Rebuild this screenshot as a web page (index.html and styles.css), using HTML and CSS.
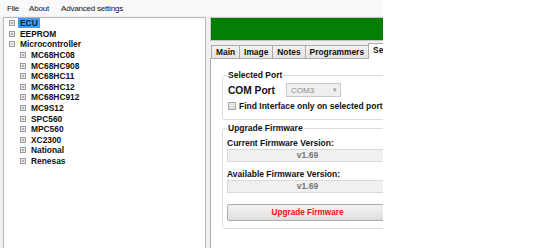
FILE: index.html
```html
<!DOCTYPE html>
<html lang="en">
<head>
  <meta charset="UTF-8">
  <title>Programmer</title>
  <link rel="stylesheet" href="styles.css">
</head>
<body>

  <div class="app">
    <!-- menu -->
    <div class="menubar">
      <span class="menu-item">File</span>
      <span class="menu-item">About</span>
      <span class="menu-item">Advanced settings</span>
    </div>

    <div class="workspace">
      <!-- device tree -->
      <div class="tree">
        <div class="node">
          <svg class="expander" viewBox="0 0 6 6"><rect x="0.5" y="0.5" width="5" height="5"/><path d="M1.5 3h3M3 1.5v3"/></svg>
          <span class="label selected">ECU</span>
        </div>
        <div class="node">
          <svg class="expander" viewBox="0 0 6 6"><rect x="0.5" y="0.5" width="5" height="5"/><path d="M1.5 3h3M3 1.5v3"/></svg>
          <span class="label">EEPROM</span>
        </div>
        <div class="node">
          <svg class="expander" viewBox="0 0 6 6"><rect x="0.5" y="0.5" width="5" height="5"/><path d="M1.5 3h3"/></svg>
          <span class="label">Microcontroller</span>
        </div>
        <div class="node child">
          <svg class="expander" viewBox="0 0 6 6"><rect x="0.5" y="0.5" width="5" height="5"/><path d="M1.5 3h3M3 1.5v3"/></svg>
          <span class="label">MC68HC08</span>
        </div>
        <div class="node child">
          <svg class="expander" viewBox="0 0 6 6"><rect x="0.5" y="0.5" width="5" height="5"/><path d="M1.5 3h3M3 1.5v3"/></svg>
          <span class="label">MC68HC908</span>
        </div>
        <div class="node child">
          <svg class="expander" viewBox="0 0 6 6"><rect x="0.5" y="0.5" width="5" height="5"/><path d="M1.5 3h3M3 1.5v3"/></svg>
          <span class="label">MC68HC11</span>
        </div>
        <div class="node child">
          <svg class="expander" viewBox="0 0 6 6"><rect x="0.5" y="0.5" width="5" height="5"/><path d="M1.5 3h3M3 1.5v3"/></svg>
          <span class="label">MC68HC12</span>
        </div>
        <div class="node child">
          <svg class="expander" viewBox="0 0 6 6"><rect x="0.5" y="0.5" width="5" height="5"/><path d="M1.5 3h3M3 1.5v3"/></svg>
          <span class="label">MC68HC912</span>
        </div>
        <div class="node child">
          <svg class="expander" viewBox="0 0 6 6"><rect x="0.5" y="0.5" width="5" height="5"/><path d="M1.5 3h3M3 1.5v3"/></svg>
          <span class="label">MC9S12</span>
        </div>
        <div class="node child">
          <svg class="expander" viewBox="0 0 6 6"><rect x="0.5" y="0.5" width="5" height="5"/><path d="M1.5 3h3M3 1.5v3"/></svg>
          <span class="label">SPC560</span>
        </div>
        <div class="node child">
          <svg class="expander" viewBox="0 0 6 6"><rect x="0.5" y="0.5" width="5" height="5"/><path d="M1.5 3h3M3 1.5v3"/></svg>
          <span class="label">MPC560</span>
        </div>
        <div class="node child">
          <svg class="expander" viewBox="0 0 6 6"><rect x="0.5" y="0.5" width="5" height="5"/><path d="M1.5 3h3M3 1.5v3"/></svg>
          <span class="label">XC2300</span>
        </div>
        <div class="node child">
          <svg class="expander" viewBox="0 0 6 6"><rect x="0.5" y="0.5" width="5" height="5"/><path d="M1.5 3h3M3 1.5v3"/></svg>
          <span class="label">National</span>
        </div>
        <div class="node child">
          <svg class="expander" viewBox="0 0 6 6"><rect x="0.5" y="0.5" width="5" height="5"/><path d="M1.5 3h3M3 1.5v3"/></svg>
          <span class="label">Renesas</span>
        </div>
      </div>

      <!-- right side -->
      <div class="panel">
        <div class="status"></div>

        <div class="tabs">
          <div class="tab">Main</div>
          <div class="tab">Image</div>
          <div class="tab">Notes</div>
          <div class="tab">Programmers</div>
          <div class="tab active">Settings</div>
        </div>

        <div class="tabpage">
          <fieldset class="group">
            <legend>Selected Port</legend>
            <div class="port-row">
              <span class="port-label">COM Port</span>
              <div class="combo">
                <span>COM3</span>
                <span class="combo-arrow">&#9662;</span>
              </div>
            </div>
            <div class="check-row">
              <span class="checkbox"></span>
              <span>Find Interface only on selected port</span>
            </div>
          </fieldset>

          <fieldset class="group group-fw">
            <legend>Upgrade Firmware</legend>
            <div class="field-label">Current Firmware Version:</div>
            <div class="readonly">v1.69</div>
            <div class="field-label second">Available Firmware Version:</div>
            <div class="readonly">v1.69</div>
            <div class="upgrade-btn">Upgrade Firmware</div>
          </fieldset>
        </div>
      </div>
    </div>
  </div>

</body>
</html>
```

FILE: styles.css
```css
* {
  box-sizing: border-box;
}

body {
  margin: 0;
  background: #fff;
  font-family: 'Liberation Sans', Arial, sans-serif;
  color: #111;
}

.app {
  width: 383px;
  height: 248px;
  overflow: hidden;
  background: #f0f0f0;
  display: flex;
  flex-direction: column;
}

/* menu */
.menubar {
  height: 16px;
  flex: none;
  display: flex;
  align-items: center;
  padding-left: 7px;
  gap: 10px;
  background: #f9f9f9;
  font-size: 8px;
  letter-spacing: -0.2px;
}

.menu-item:nth-child(2) {
  margin-right: 2px;
}

/* main area: tree and tab page both run on below the window edge */
.workspace {
  display: flex;
  flex: 1;
  padding-top: 1px;
  min-height: 0;
}

.tree {
  width: 203px;
  flex: none;
  margin-left: 3px;
  background: #fff;
  border: 1px solid #b4b6bb;
  border-bottom: none;
  font-size: 8.4px;
  font-weight: bold;
}

.node {
  height: 10.6px;
  display: flex;
  align-items: center;
  padding-left: 5px;
}

.node.child {
  padding-left: 16px;
}

.expander {
  width: 6px;
  height: 6px;
  flex: none;
  margin-right: 3px;
  fill: #fafafa;
  stroke: #9a9a9a;
  stroke-width: 1;
}

.label {
  padding: 0 2px;
  line-height: 10px;
}

.label.selected {
  background: #3f9ef2;
  color: #0d2340;
}

/* right side */
.panel {
  width: 210px;
  flex: none;
  margin-left: 4px;
  display: flex;
  flex-direction: column;
}

.status {
  height: 24px;
  flex: none;
  background: #038003;
  border: 1px solid #c6c6c6;
}

.tabs {
  display: flex;
  align-items: flex-end;
  height: 16px;
  margin-top: 1px;
  padding-left: 1px;
  font-size: 8.4px;
  font-weight: bold;
}

.tab {
  height: 13px;
  line-height: 12px;
  padding: 0 4px;
  margin-right: -1px;
  border: 1px solid #acacac;
  border-bottom: none;
  background: linear-gradient(#f2f2f2, #e4e4e4);
}

.tab.active {
  height: 16px;
  line-height: 13px;
  background: #fff;
  position: relative;
  top: 1px;
}

.tabpage {
  flex: 1;
  background: #fff;
  border: 1px solid #acacac;
  border-bottom: none;
  padding: 11px 0 0 11px;
}

/* group boxes */
.group {
  margin: 0;
  padding: 0 0 7px 4px;
  border: 1px solid #dcdcdc;
  border-radius: 3px;
  font-size: 8.5px;
  font-weight: bold;
}

.group legend {
  padding: 0 1px;
  line-height: 10px;
}

.group-fw {
  margin-top: 3px;
}

.port-row {
  display: flex;
  align-items: center;
  height: 14px;
  margin-top: 3px;
}

.port-label {
  width: 59px;
  font-size: 10.2px;
  padding-left: 1px;
}

.combo {
  width: 55px;
  height: 14px;
  display: flex;
  align-items: center;
  justify-content: space-between;
  padding: 0 3px 0 4px;
  background: #efefef;
  border: 1px solid #cbcbcb;
  color: #8a8a8a;
  font-weight: normal;
  font-size: 8px;
}

.combo-arrow {
  font-size: 7px;
  color: #9a9a9a;
}

.check-row {
  display: flex;
  align-items: center;
  height: 12px;
  margin-top: 3px;
  padding-left: 1px;
  gap: 3px;
}

.checkbox {
  width: 8px;
  height: 8px;
  border: 1px solid #a9a9a9;
  background: linear-gradient(#e9e9e9, #dcdcdc);
}

.field-label {
  height: 10px;
  line-height: 10px;
  margin-top: 5px;
}

.field-label.second {
  margin-top: 7px;
}

.readonly {
  height: 13px;
  margin-top: 1px;
  line-height: 11px;
  text-align: center;
  padding-right: 30px;
  background: #f0f0f0;
  border: 1px solid #d9d9d9;
  color: #777;
}

.upgrade-btn {
  height: 17px;
  margin-top: 11px;
  line-height: 15px;
  text-align: center;
  padding-right: 30px;
  background: linear-gradient(#f3f3f3, #dedede);
  border: 1px solid #adadad;
  border-radius: 2px;
  color: #f01010;
  font-size: 8.2px;
}
```
